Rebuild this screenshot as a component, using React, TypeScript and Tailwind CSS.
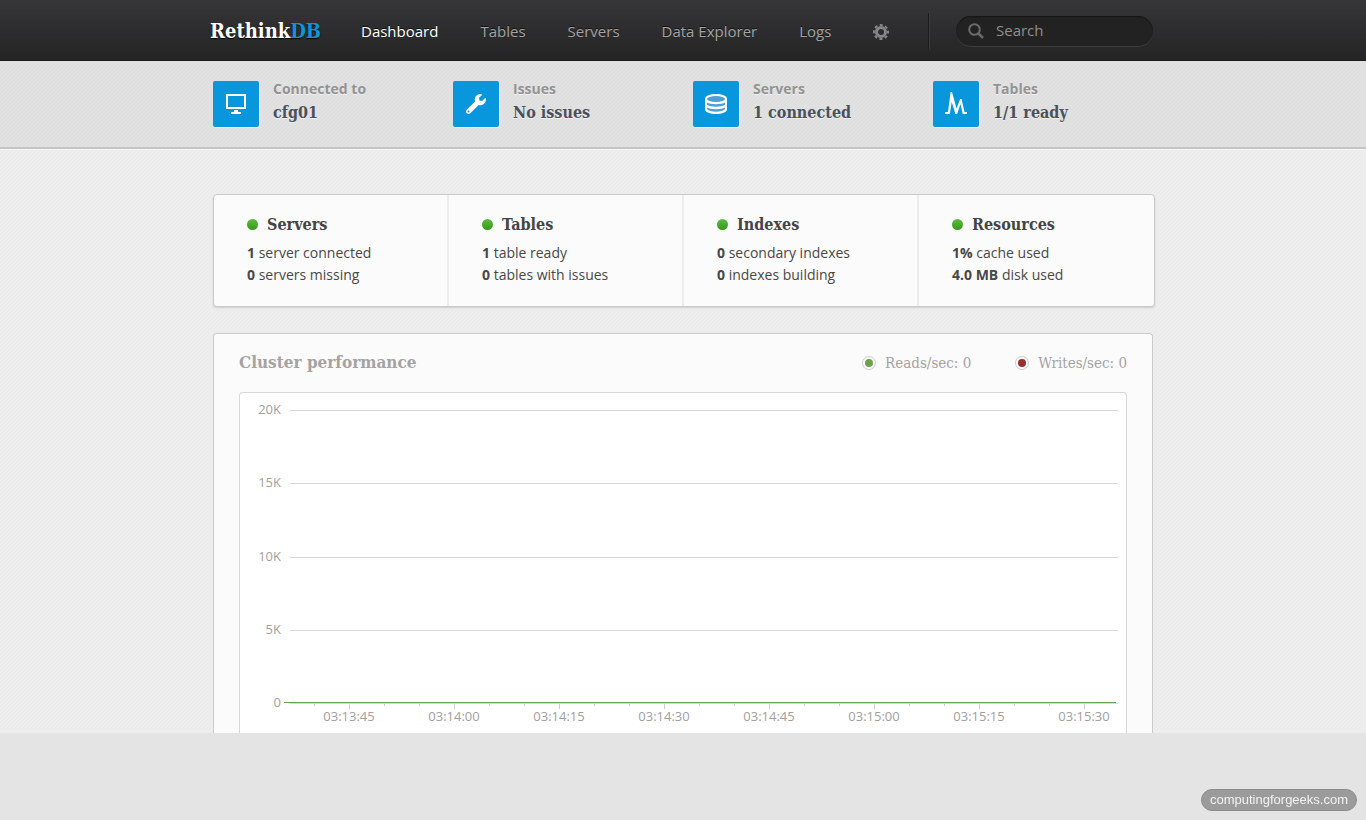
import { FaWrench } from 'react-icons/fa';

const navLinks = ['Dashboard', 'Tables', 'Servers', 'Data Explorer', 'Logs'];

const stats = [
  { label: 'Connected to', value: 'cfg01', icon: <MonitorIcon /> },
  { label: 'Issues', value: 'No issues', icon: <FaWrench className="size-5" /> },
  { label: 'Servers', value: '1 connected', icon: <DatabaseIcon /> },
  { label: 'Tables', value: '1/1 ready', icon: <PulseIcon /> },
];

const summary = [
  { title: 'Servers', rows: [['1', 'server connected'], ['0', 'servers missing']] },
  { title: 'Tables', rows: [['1', 'table ready'], ['0', 'tables with issues']] },
  { title: 'Indexes', rows: [['0', 'secondary indexes'], ['0', 'indexes building']] },
  { title: 'Resources', rows: [['1%', 'cache used'], ['4.0 MB', 'disk used']] },
];

const yTicks = [
  { label: '20K', y: 17 },
  { label: '15K', y: 90 },
  { label: '10K', y: 164 },
  { label: '5K', y: 237 },
  { label: '0', y: 310 },
];

const times = ['03:13:45', '03:14:00', '03:14:15', '03:14:30', '03:14:45', '03:15:00', '03:15:15', '03:15:30'];
const minorTicks = Array.from({ length: 23 }, (_, i) => 74 + i * 35).filter((x) => x < 878);

const slab = "font-['DejaVu_Serif_Condensed','DejaVu_Serif',serif]";
const texture =
  'bg-[linear-gradient(135deg,rgba(0,0,0,0.02)_12.5%,transparent_12.5%,transparent_50%,rgba(0,0,0,0.02)_50%,rgba(0,0,0,0.02)_62.5%,transparent_62.5%)] bg-size-[4px_4px]';

function MonitorIcon() {
  return (
    <svg viewBox="0 0 20 20" className="size-5" fill="none" aria-hidden="true">
      <rect x="1" y="1" width="18" height="13" stroke="currentColor" strokeWidth="2" />
      <path d="M8 16h4v2h3v2H5v-2h3z" fill="currentColor" />
    </svg>
  );
}

function DatabaseIcon() {
  return (
    <svg viewBox="0 0 22 20" className="h-5 w-[22px]" aria-hidden="true">
      <path d="M0 5C0 1.600 5 0 11 0s11 1.600 11 5v10c0 3.400-5 5-11 5S0 18.400 0 15z" fill="#fff" />
      <ellipse cx="11" cy="5" rx="9" ry="3" fill="#4f9fd3" />
      <path d="M2 8.500c3 2.200 15 2.200 18 0v2c-2.500 3-15.500 3-18 0z" fill="#4f9fd3" />
      <path d="M2 13.500c3 2.200 15 2.200 18 0v1.500c-2.500 3.500-15.500 3.500-18 0z" fill="#4f9fd3" />
    </svg>
  );
}

function PulseIcon() {
  return (
    <svg viewBox="0 0 22 24" className="h-6 w-[22px]" aria-hidden="true">
      <path
        d="M0 20h3L5.600 0h1.400l4.500 16.500L15.200 7h1.400l2.900 13H22v2h-4.300l-2.200-10-3.400 10h-1.700L6.700 10 4.800 22H0z"
        fill="currentColor"
      />
    </svg>
  );
}

function GearIcon() {
  return (
    <svg viewBox="0 0 16 16" className="size-4" fill="none" stroke="currentColor" aria-hidden="true">
      <circle cx="8" cy="8" r="4.500" strokeWidth="3" />
      <circle cx="8" cy="8" r="7" strokeWidth="2" strokeDasharray="3.100 2.398" strokeDashoffset="1.550" />
    </svg>
  );
}

function SearchIcon() {
  return (
    <svg viewBox="0 0 16 16" className="size-4 shrink-0" fill="none" stroke="currentColor" aria-hidden="true">
      <circle cx="6.500" cy="6.500" r="5.300" strokeWidth="2" />
      <path d="M10.500 10.500l4.500 4.500" strokeWidth="2.500" />
    </svg>
  );
}

function Header() {
  return (
    <header className="bg-linear-to-b from-[#363638] to-[#242425] shadow-[inset_0_-1px_0_#1b1b1b]">
      <div className="mx-auto flex h-[61px] max-w-[940px] items-center">
        <a href="#" className={`${slab} -ml-[3px] w-[151px] text-xl font-bold text-white [text-shadow:0_1px_1px_#000]`}>
          Rethink<span className="text-[#0897dc]">DB</span>
        </a>
        <nav className="flex items-center gap-[42px] pt-0.5 text-[15px] whitespace-nowrap text-[#a4a4a4] [text-shadow:0_-1px_0_#111]">
          {navLinks.map((link, i) => (
            <a key={link} href="#" className={i === 0 ? 'text-white' : 'hover:text-white'}>
              {link}
            </a>
          ))}
          <button type="button" aria-label="Settings" className="text-[#858585]">
            <GearIcon />
          </button>
        </nav>
        <div className="ml-auto flex items-center gap-[26px]">
          <span className="h-9 w-0.5 border-l border-[#1c1c1c] bg-[#3c3c3e]" />
          <label className="flex h-[30px] w-[197px] items-center gap-3 rounded-full bg-[#222] px-3 text-[#6a6a6a] shadow-[inset_0_1px_1px_#161616,0_1px_0_#3d3d3d]">
            <SearchIcon />
            <input
              type="text"
              placeholder="Search"
              aria-label="Search"
              className="w-full min-w-0 bg-transparent text-[15px] text-white outline-none placeholder:text-[#8f8f8f]"
            />
          </label>
        </div>
      </div>
    </header>
  );
}

function StatusBar() {
  return (
    <section className={`${texture} border-b-2 border-[#c4c4c4] bg-[#e1e1e1]`}>
      <div className="mx-auto grid h-[86px] max-w-[940px] grid-cols-4 gap-x-5 pt-5">
        {stats.map((stat) => (
          <div key={stat.label} className="flex items-start gap-3.5">
            <div className="flex size-[46px] items-center justify-center rounded-xs bg-[#0897dc] text-white shadow-[1px_1px_0_#f6f6f6]">
              {stat.icon}
            </div>
            <div className="[text-shadow:0_1px_0_#f0f0f0]">
              <div className="text-sm leading-4 font-bold text-[#939393]">{stat.label}</div>
              <div className={`${slab} text-base leading-8 font-bold text-[#4a505c]`}>{stat.value}</div>
            </div>
          </div>
        ))}
      </div>
    </section>
  );
}

function Summary() {
  return (
    <section className="-mr-0.5 grid grid-cols-4 divide-x-2 divide-[#ededed] rounded-sm border border-[#cbcbcb] bg-[#fbfbfb] shadow-[0_1px_2px_#ccc]">
      {summary.map((card) => (
        <div key={card.title} className="h-[111px] pt-4 pl-[33px] text-sm leading-[22px] text-[#484848]">
          <h2 className={`${slab} mb-1 flex h-[27px] items-center gap-[9px] text-base font-bold text-[#444]`}>
            <span className="size-[11px] rounded-full bg-linear-to-b from-[#5fba43] to-[#319a13]" />
            {card.title}
          </h2>
          {card.rows.map(([count, text]) => (
            <p key={text}>
              <strong>{count}</strong> {text}
            </p>
          ))}
        </div>
      ))}
    </section>
  );
}

function LegendItem({ label, dot }: { label: string; dot: string }) {
  return (
    <div className="flex items-center gap-[9px]">
      <span className="flex size-3.5 items-center justify-center rounded-full border border-[#ccc] bg-white">
        <span className={`size-2 rounded-full ${dot}`} />
      </span>
      {label}
    </div>
  );
}

function Chart() {
  return (
    <svg viewBox="0 0 886 340" className="block w-full" fontSize="13" fill="#a0a0a0" role="img" aria-label="Reads and writes per second">
      {yTicks.map((tick) => (
        <g key={tick.label}>
          <rect x="50" y={tick.y} width="828" height="1" fill="#d8d8d8" />
          <text x="41" y={tick.y + 4} textAnchor="end">
            {tick.label}
          </text>
        </g>
      ))}
      {minorTicks.map((x) => (
        <rect key={x} x={x} y="311" width="1" height="2" fill="#d0d0d0" />
      ))}
      {times.map((time, i) => (
        <g key={time}>
          <rect x={109 + i * 105} y="311" width="1" height="5" fill="#d0d0d0" />
          <text x={109 + i * 105} y="328" textAnchor="middle">
            {time}
          </text>
        </g>
      ))}
      <rect x="44" y="309" width="832" height="1" fill="#6ca24c" />
    </svg>
  );
}

function Performance() {
  return (
    <section className="mt-[26px] rounded-t-sm border border-b-0 border-[#cbcbcb] bg-[#fbfbfb] px-[25px]">
      <div className={`${slab} flex h-[58px] items-center justify-between text-[#a3a3a3]`}>
        <h2 className="text-[17px] font-bold">Cluster performance</h2>
        <div className="flex gap-11 text-[15px]">
          <LegendItem label="Reads/sec: 0" dot="bg-[#6ca24c]" />
          <LegendItem label="Writes/sec: 0" dot="bg-[#983030]" />
        </div>
      </div>
      <div className="rounded-t-sm border border-b-0 border-[#d8d8d8] bg-white">
        <Chart />
      </div>
    </section>
  );
}

export default function App() {
  return (
    <div className="flex min-h-screen flex-col bg-[#e4e4e4] font-['Open_Sans',sans-serif]">
      <Header />
      <StatusBar />
      <main className={`${texture} border-t border-[#f6f6f6] bg-[#eeeeee] pt-11`}>
        <div className="mx-auto max-w-[940px]">
          <Summary />
          <Performance />
        </div>
      </main>
      <a
        href="#"
        className="fixed right-[9px] bottom-[9px] rounded-full border border-[#8c8c8c] bg-[#9b9b9b] px-2 font-['Liberation_Sans',sans-serif] text-[13px] leading-5 text-[#f2f2f2]"
      >
        computingforgeeks.com
      </a>
    </div>
  );
}
